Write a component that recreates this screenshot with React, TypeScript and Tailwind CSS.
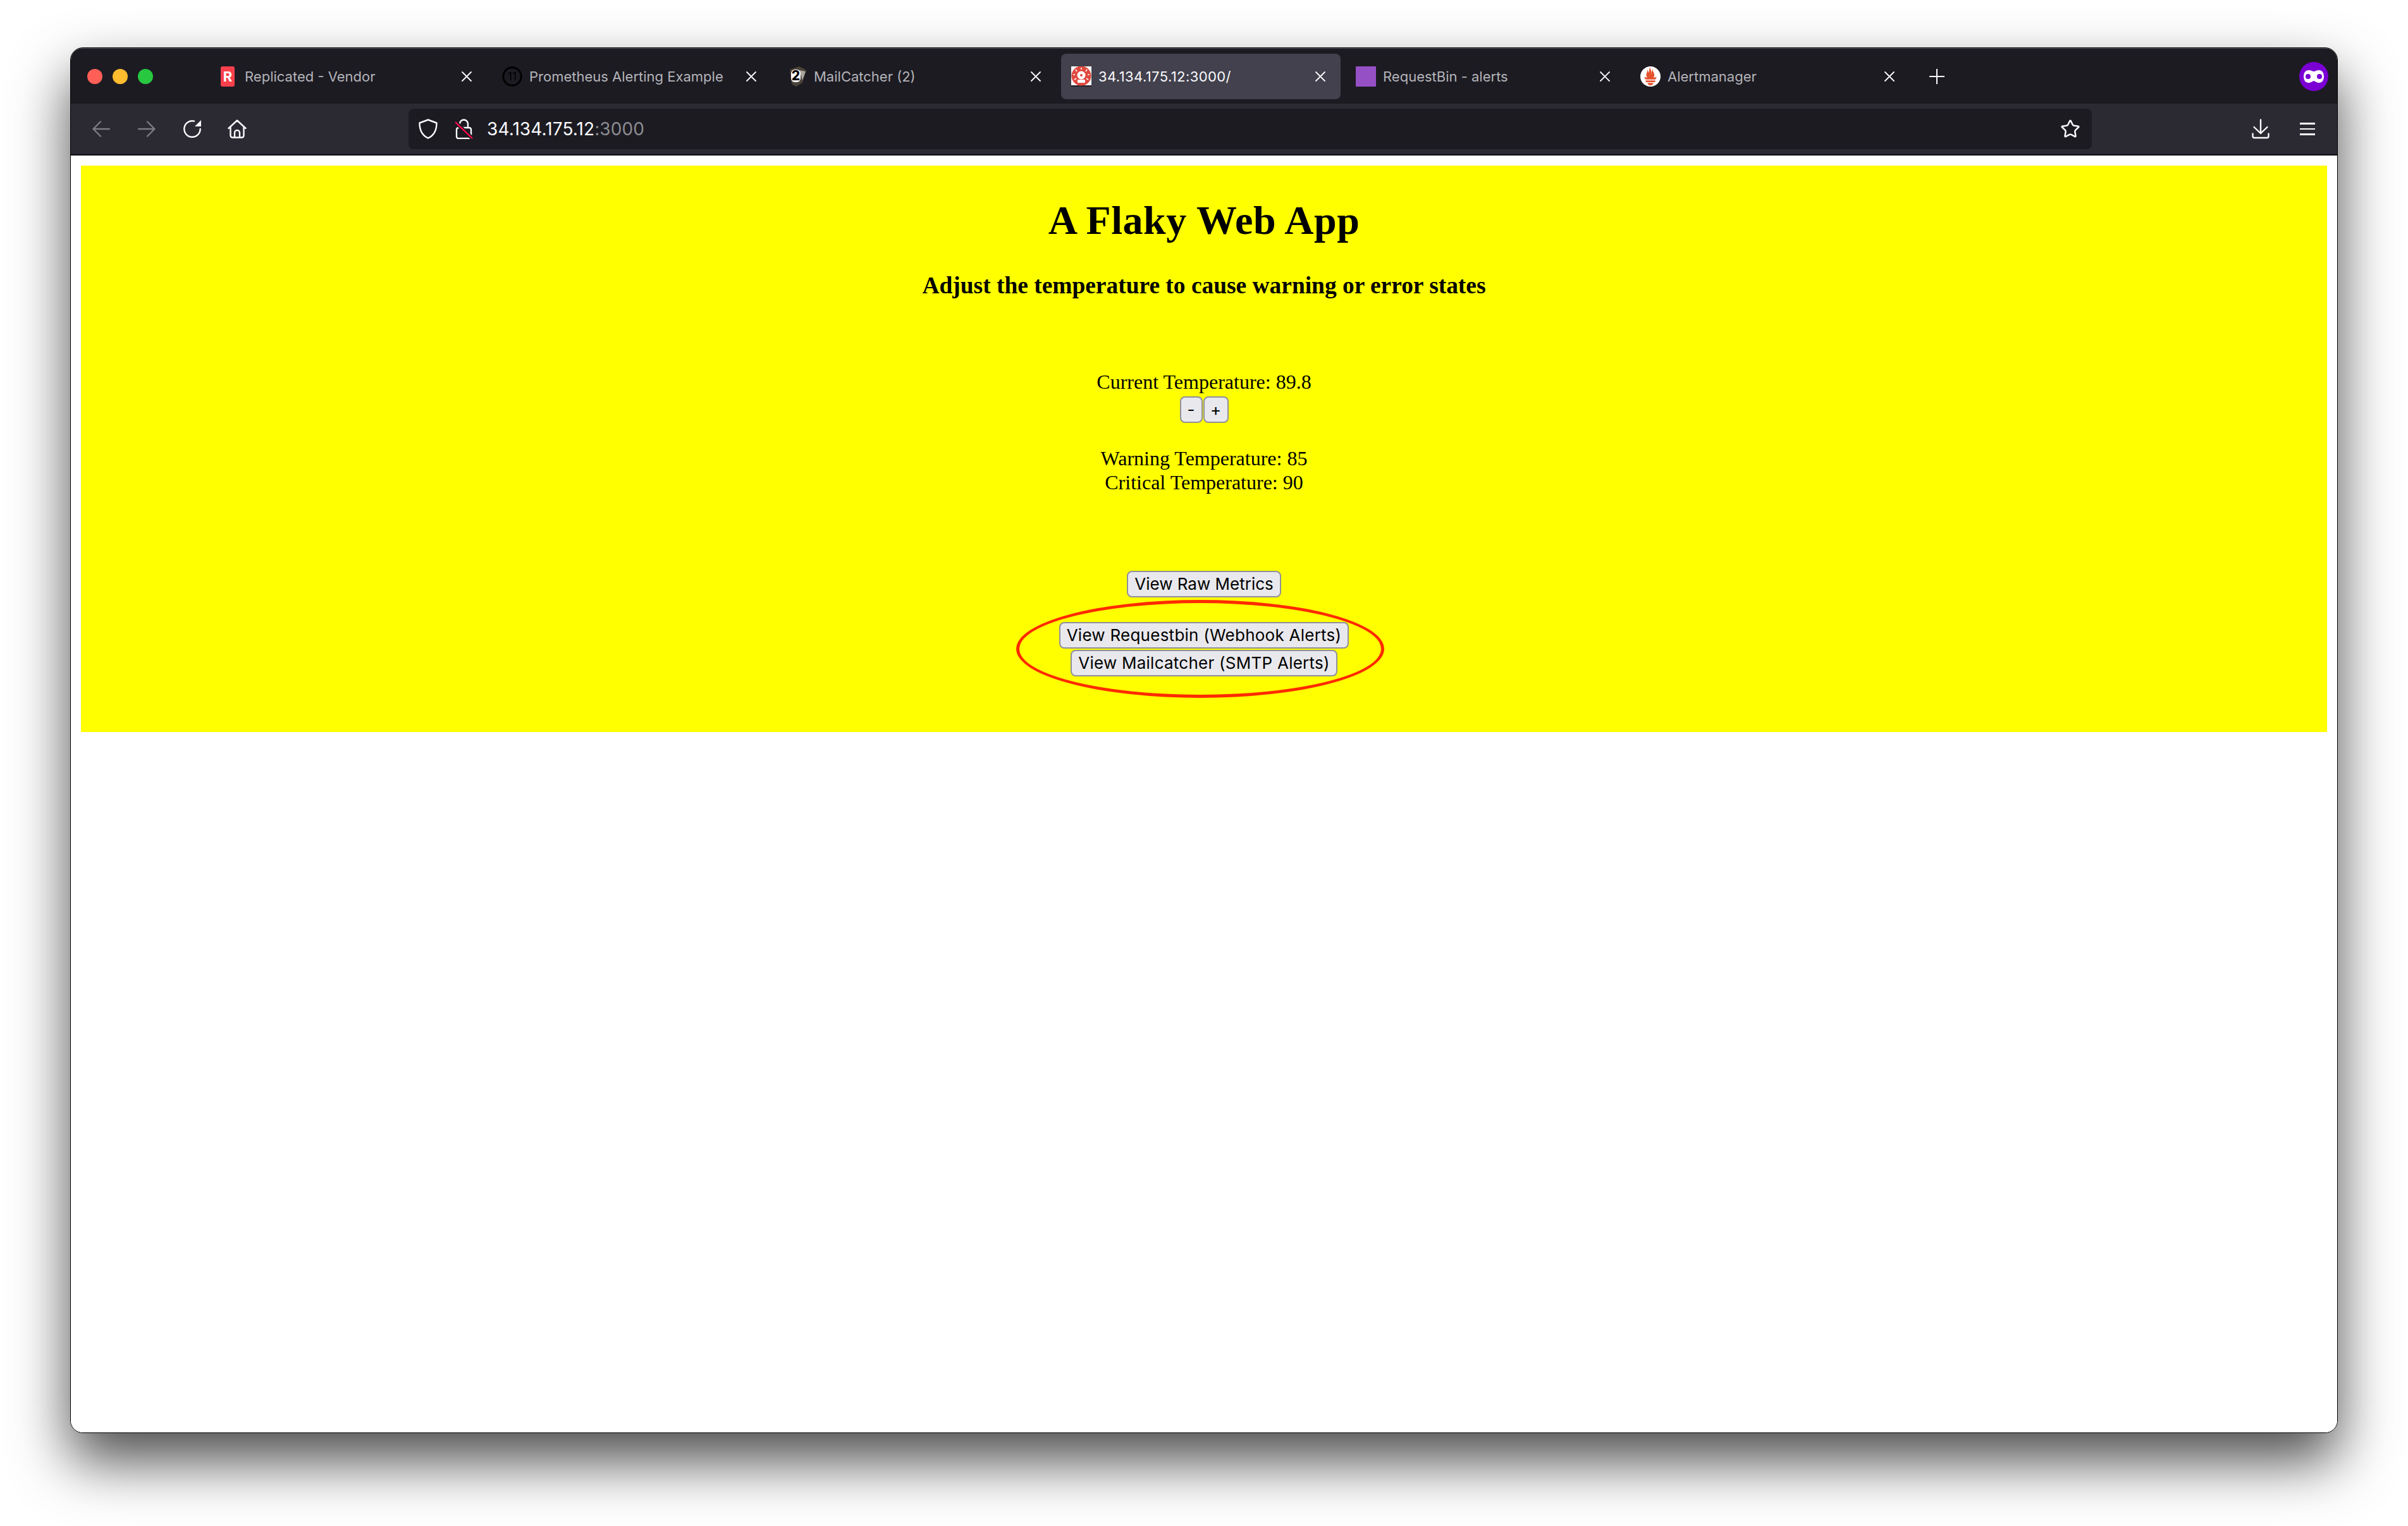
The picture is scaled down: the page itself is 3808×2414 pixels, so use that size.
import { Star } from "lucide-react";

const CloseIcon = () => (
  <svg width="16" height="16" viewBox="0 0 16 16" className="shrink-0">
    <path d="M1 1L15 15M15 1L1 15" stroke="#fbfbfe" strokeWidth="1.8" strokeLinecap="round" />
  </svg>
);

const ReplicatedIcon = () => (
  <div className="w-[22px] h-8 ml-[5px] rounded-[3px] bg-[#f9404c] flex items-center justify-center text-white text-[22px] font-bold leading-none">
    R
  </div>
);

const BadgeIcon = () => (
  <svg width="32" height="32" viewBox="0 0 32 32">
    <circle cx="16" cy="16" r="14.2" fill="none" stroke="#000" strokeWidth="3" />
    <text x="16" y="22" textAnchor="middle" fontSize="17" fontFamily="Inter, sans-serif" fill="#000">
      11
    </text>
  </svg>
);

const MailCatcherIcon = () => (
  <svg width="32" height="32" viewBox="0 0 32 32">
    <path d="M5 5L20 0L31 6L25 26L15 32L8 28Z" fill="#4a4238" />
    <path d="M20 6L30 8L25 22Z" fill="#a9a59f" />
    <rect x="7" y="5" width="15" height="20" rx="6" fill="#fff" />
    <text x="14.5" y="22" textAnchor="middle" fontSize="21" fontWeight="800" fontFamily="Inter, sans-serif" fill="#000">
      2
    </text>
  </svg>
);

const AlarmIcon = () => (
  <svg width="32" height="32" viewBox="0 0 32 32">
    <rect width="32" height="32" fill="#fff" />
    <rect y="30" width="32" height="2" fill="#1c1b22" />
    <circle cx="16" cy="15" r="15.5" fill="#e0483e" />
    <circle cx="16" cy="14" r="6.5" fill="#fff" />
    <circle cx="16" cy="14" r="2" fill="#e0483e" />
    <rect x="10" y="21" width="12" height="5" rx="1" fill="#fff" />
    <path
      d="M16 2V5M7 5L9 8M25 5L23 8M3 13H6M29 13H26M5 21L8 19M27 21L24 19"
      stroke="#fff"
      strokeWidth="1.6"
    />
  </svg>
);

const PrometheusIcon = () => (
  <svg width="32" height="32" viewBox="0 0 24 24">
    <circle cx="12" cy="12" r="12" fill="#fff" />
    <path
      fill="#e6522c"
      d="M12 22.459c-1.885 0-3.414-1.26-3.414-2.812h6.828c0 1.552-1.529 2.812-3.414 2.812zM17.64 18.714H6.359v-2.046h11.282v2.046zM17.6 15.615H6.391c-.037-.043-.075-.086-.111-.13-1.155-1.401-1.427-2.133-1.691-2.879-.004-.025 1.4.287 2.395.511 0 0 .512.119 1.26.255-.718-.842-1.145-1.912-1.145-3.005 0-2.401 1.842-4.498 1.177-6.193.648.053 1.34 1.367 1.387 3.422.688-.951.975-2.687.975-3.752 0-1.103.727-2.385 1.454-2.429-.648 1.069.168 1.984.894 4.256.272.854.238 2.29.449 3.201.07-1.892.395-4.652 1.595-5.605-.529 1.2.078 2.702.494 3.424.671 1.164 1.078 2.047 1.078 3.716 0 1.119-.413 2.172-1.111 2.996.794-.149 1.342-.283 1.342-.283l2.578-.503s-.375 1.541-1.815 3.025z"
    />
  </svg>
);

const tabs = [
  { title: "Replicated - Vendor", icon: <ReplicatedIcon /> },
  { title: "Prometheus Alerting Example", icon: <BadgeIcon /> },
  { title: "MailCatcher (2)", icon: <MailCatcherIcon /> },
  { title: "34.134.175.12:3000/", icon: <AlarmIcon />, active: true },
  { title: "RequestBin - alerts", icon: <div className="w-8 h-8 bg-[#9650c5]" /> },
  { title: "Alertmanager", icon: <PrometheusIcon /> },
];

const Tab = ({ title, icon, active }: { title: string; icon: React.ReactNode; active?: boolean }) => (
  <div
    className={`w-[442px] h-[72px] shrink-0 rounded-lg flex items-center pl-4 pr-6 ${
      active ? "bg-[#42414d] text-[#fbfbfe] tracking-[0.4px]" : "text-[#b4b4b9]"
    }`}
  >
    <div className="w-8 h-8 shrink-0">{icon}</div>
    <span className="ml-[11px] flex-1 text-[22px] leading-none whitespace-nowrap">{title}</span>
    <CloseIcon />
  </div>
);

const NavButton = ({ children }: { children: React.ReactNode }) => (
  <div className="w-[72px] h-16 shrink-0 flex items-center justify-center">{children}</div>
);

const PageButton = ({ children, wide }: { children: React.ReactNode; wide?: boolean }) => (
  <button
    className={`h-[42px] px-[10px] bg-[#e9e9ed] border-2 border-[#8f8f9d] rounded-lg text-[26px] leading-none text-black whitespace-nowrap font-['Inter',sans-serif] ${
      wide ? "tracking-[0.25px]" : ""
    }`}
  >
    {children}
  </button>
);

export default function App() {
  return (
    <div className="h-[2414px] overflow-hidden bg-white pt-[75px] px-[111px] font-['Inter',sans-serif]">
      <div className="h-[2192px] flex flex-col overflow-hidden rounded-[20px] border border-black bg-white shadow-[0_44px_90px_rgba(0,0,0,0.7)]">
        {/* title bar */}
        <div className="h-[88px] shrink-0 bg-[#1c1b22] border-t border-[#55545c] flex items-center pl-[26px] pr-[14px]">
          <div className="flex gap-4">
            <div className="w-6 h-6 rounded-full bg-[#ff5f57]" />
            <div className="w-6 h-6 rounded-full bg-[#febc2e]" />
            <div className="w-6 h-6 rounded-full bg-[#28c840]" />
          </div>
          <div className="ml-[86px] flex gap-2">
            {tabs.map((tab) => (
              <Tab key={tab.title} {...tab} />
            ))}
          </div>
          <svg width="24" height="24" viewBox="0 0 24 24" className="ml-[31px]">
            <path d="M12 0V24M0 12H24" stroke="#fbfbfe" strokeWidth="2" />
          </svg>
          <svg width="46" height="46" viewBox="0 0 46 46" className="ml-auto">
            <circle cx="23" cy="23" r="23" fill="#7b00d4" />
            <path
              d="M15 13C19 13 21 15 23 15C25 15 27 13 31 13C36 13 39 17 39 23C39 29 36 33 31 33C27 33 25 30 23 30C21 30 19 33 15 33C10 33 7 29 7 23C7 17 10 13 15 13Z"
              fill="#fff"
            />
            <circle cx="14" cy="23" r="4" fill="#7b00d4" />
            <circle cx="32" cy="23" r="4" fill="#7b00d4" />
          </svg>
        </div>

        {/* nav bar */}
        <div className="h-[80px] shrink-0 bg-[#2b2a33] flex items-center pl-3 pr-[11px]">
          <NavButton>
            <svg width="28" height="26" viewBox="0 0 28 26" fill="none" stroke="#7c7b84" strokeWidth="2.4" strokeLinecap="round" strokeLinejoin="round">
              <path d="M1.5 13H27M13 1.5L1.5 13L13 24.5" />
            </svg>
          </NavButton>
          <NavButton>
            <svg width="28" height="26" viewBox="0 0 28 26" fill="none" stroke="#7c7b84" strokeWidth="2.4" strokeLinecap="round" strokeLinejoin="round">
              <path d="M1 13H26.5M15 1.5L26.5 13L15 24.5" />
            </svg>
          </NavButton>
          <NavButton>
            <svg width="28" height="28" viewBox="0 0 28 28" fill="none">
              <path d="M26.7 14A12.7 12.7 0 1 1 17 1.7" stroke="#fbfbfe" strokeWidth="2.4" strokeLinecap="round" />
              <path d="M18 10H28V0Z" fill="#fbfbfe" />
            </svg>
          </NavButton>
          <NavButton>
            <svg width="30" height="30" viewBox="0 0 30 30" fill="none" stroke="#fbfbfe" strokeWidth="2.4" strokeLinecap="round" strokeLinejoin="round" className="mr-[2px]">
              <path d="M1.5 14L15 1.5L28.5 14M4.5 12V25.5A3 3 0 0 0 7.5 28.5H22.5A3 3 0 0 0 25.5 25.5V12M11 28.5V21A4 4 0 0 1 19 21V28.5" />
            </svg>
          </NavButton>

          <div className="ml-[234px] flex-1 h-16 rounded-lg bg-[#1c1b22] flex items-center pl-4 pr-[18px]">
            <svg width="30" height="32" viewBox="0 0 30 32" fill="none" stroke="#fbfbfe" strokeWidth="2.4" strokeLinejoin="round">
              <path d="M15 1.5L28.5 6.5C28.5 18 25 26 15 30.5C5 26 1.5 18 1.5 6.5Z" />
            </svg>
            <svg width="28" height="32" viewBox="0 0 28 32" fill="none" className="ml-[28px]">
              <path d="M20 14V8A6.5 6.5 0 0 0 7 8" stroke="#fbfbfe" strokeWidth="2.4" />
              <rect x="2" y="14" width="23" height="17" rx="3" stroke="#fbfbfe" strokeWidth="2.4" />
              <path d="M0 5L27 31" stroke="#1c1b22" strokeWidth="6" />
              <path d="M0 5L27 31" stroke="#ff0a4a" strokeWidth="2.4" />
            </svg>
            <span className="ml-[22px] text-[28px] leading-none tracking-[0.1px] text-[#fbfbfe]">
              34.134.175.12<span className="text-[#8c8c91]">:3000</span>
            </span>
            <Star className="ml-auto text-[#fbfbfe]" size={32} strokeWidth={1.9} />
          </div>

          <div className="ml-[231px] flex gap-[2px]">
            <NavButton>
              <svg width="28" height="32" viewBox="0 0 28 32" fill="none" stroke="#fbfbfe" strokeWidth="2.4" strokeLinecap="round" strokeLinejoin="round">
                <path d="M14 1.5V23M3.5 13L14 23L24.5 13M1.5 23.5V27.5A2.5 2.5 0 0 0 4 30H24A2.5 2.5 0 0 0 26.5 27.5V23.5" />
              </svg>
            </NavButton>
            <NavButton>
              <div className="w-6 flex flex-col gap-[6px]">
                <div className="h-[2.5px] bg-[#fbfbfe]" />
                <div className="h-[2.5px] bg-[#fbfbfe]" />
                <div className="h-[2.5px] bg-[#fbfbfe]" />
              </div>
            </NavButton>
          </div>
        </div>
        <div className="h-[2px] shrink-0 bg-[#0b0b0f]" />

        {/* page */}
        <div className="flex-1 bg-white p-4 font-['Liberation_Serif',serif] text-black">
          <div className="h-[896px] bg-[#ffff00] flex flex-col items-center">
            <h1 className="mt-[50px] text-[64px] leading-[74px] font-bold tracking-[0.55px]">A Flaky Web App</h1>
            <h3 className="mt-[44px] text-[37.44px] leading-[43px] font-bold">
              Adjust the temperature to cause warning or error states
            </h3>
            <p className="mt-[113px] text-[32px] leading-[37px]">Current Temperature: 89.8</p>
            <div className="mt-[4px] flex gap-px">
              <button className="w-[36px] h-[42px] bg-[#e9e9ed] border-2 border-[#8f8f9d] rounded-lg text-[26px] leading-none font-['Inter',sans-serif]">
                -
              </button>
              <button className="w-[40px] h-[42px] bg-[#e9e9ed] border-2 border-[#8f8f9d] rounded-lg text-[26px] leading-none font-['Inter',sans-serif]">
                +
              </button>
            </div>
            <p className="mt-[37px] text-[32px] leading-[38px]">Warning Temperature: 85</p>
            <p className="text-[32px] leading-[38px]">Critical Temperature: 90</p>
            <div className="mt-[121px]">
              <PageButton>View Raw Metrics</PageButton>
            </div>
            <div className="relative mt-[39px] flex flex-col items-center gap-[2px]">
              <PageButton wide>View Requestbin (Webhook Alerts)</PageButton>
              <PageButton wide>View Mailcatcher (SMTP Alerts)</PageButton>
              <div className="absolute -left-[68px] -top-[35px] w-[582px] h-[155px] rounded-[50%] border-[5px] border-[#ff2a00] pointer-events-none" />
            </div>
          </div>
        </div>
      </div>
    </div>
  );
}
